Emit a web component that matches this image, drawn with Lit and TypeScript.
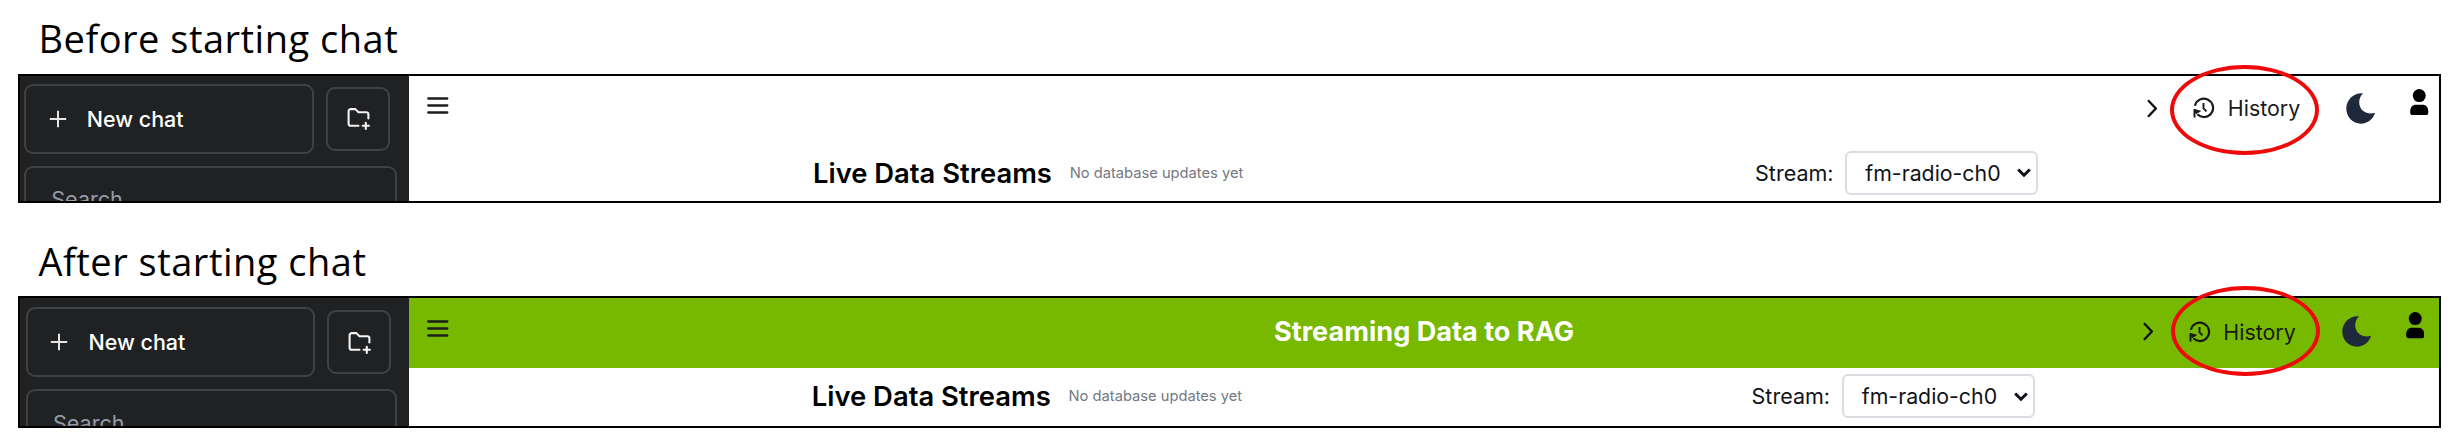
import { LitElement, html, css, svg } from "lit";
import { customElement, property } from "lit/decorators.js";

const plusIcon = svg`<svg class="plus" viewBox="0 0 18 18" width="18" height="18"><path d="M9 .8v16.4M.8 9h16.4" fill="none" stroke="currentColor" stroke-width="2"/></svg>`;

const folderIcon = svg`<svg viewBox="0 0 24 24" width="25" height="25" fill="none" stroke="currentColor" stroke-width="2" stroke-linecap="round" stroke-linejoin="round"><path d="M12 19H4.500a2 2 0 0 1-2-2V5a2 2 0 0 1 2-2H9l3 3h7.500a2 2 0 0 1 2 2v4"/><path d="M16 19h6M19 16v6"/></svg>`;

const menuIcon = svg`<svg class="menu" viewBox="0 0 22 17" width="22" height="17"><path d="M1.300 1.500h19M1.300 8.500h19M1.300 15.500h19" fill="none" stroke="currentColor" stroke-width="2.300" stroke-linecap="round"/></svg>`;

const chevronIcon = svg`<svg class="chevron" viewBox="0 0 10 19" width="10" height="19"><path d="M1 1.200l7.800 8.300L1 17.800" fill="none" stroke="currentColor" stroke-width="2.300"/></svg>`;

const historyIcon = svg`<svg class="history-icon" viewBox="0 0 22 22" width="22" height="22" fill="none" stroke="currentColor"><path d="M1.900 8.800A9.200 9.200 0 1 1 4.300 17.300" stroke-width="2.200"/><path d="M.900 12.300l6.500 1.900-4.400 2.300z" fill="currentColor" stroke-width="1"/><path d="M1.500 13v7.500" stroke-width="2"/><path d="M10.500 6v5.300l3 3" stroke-width="1.900"/></svg>`;

const moonIcon = svg`<svg class="moon" viewBox="0 0 29.300 31" width="29.3" height="31"><path d="M16.800.400C11.500 6 12.500 14 17 17.800c3.600 3 8 3.400 12.100 2C27 26.600 21.500 30.700 15 30.700 6.600 30.700.300 24 .300 15.600.300 7.200 7.500-.300 16.800.400z" fill="currentColor"/></svg>`;

const userIcon = svg`<svg class="user" viewBox="0 0 18.500 26.500" width="18.5" height="26.5" fill="currentColor"><circle cx="9.250" cy="6.600" r="6.500"/><path d="M.200 22.500c0-4 2.300-6.700 5.600-6.700h6.900c3.300 0 5.600 2.700 5.600 6.700v1.300c0 1.500-1 2.500-2.500 2.500H2.700c-1.500 0-2.500-1-2.500-2.500z"/></svg>`;

const caretIcon = svg`<svg viewBox="0 0 14 9" width="14" height="9"><path d="M1.200 1.500L7 7.200l5.800-5.700" fill="none" stroke="currentColor" stroke-width="3"/></svg>`;

@customElement("chat-frame")
export class ChatFrame extends LitElement {
  @property() heading = "";

  static styles = css`
    :host {
      --side-left: 4.3px;
      --side-top: 7.5px;
      --new-width: 290px;
      --folder-gap: 12px;
      --search-width: 372.5px;
      --search-height: 66px;
      --search-gap: 12.3px;
      --menu-left: 17.5px;
      --bar-bottom: 6px;
      --bar-right: 10.5px;
      --row-left: 403.7px;
      --row-right: 401px;
      --row-top: 4.7px;
      --bar-color: transparent;
      display: block;
      position: relative;
      font-family: Inter, sans-serif;
      font-size: 21.4px;
      line-height: 30px;
      color: #111318;
    }
    :host([started]) {
      --side-left: 6px;
      --side-top: 9.3px;
      --new-width: 289px;
      --folder-gap: 12px;
      --search-width: 371px;
      --search-height: 67.5px;
      --search-gap: 12px;
      --menu-left: 18px;
      --bar-bottom: 3px;
      --bar-right: 15px;
      --row-left: 402.5px;
      --row-right: 404.5px;
      --row-top: 6px;
      --bar-color: #76b900;
    }
    * { box-sizing: border-box; }
    svg { display: block; flex: none; }
    .frame {
      display: flex;
      width: 2423px;
      height: 129px;
      border: 2px solid #000;
      overflow: hidden;
      background: #fff;
    }
    :host([started]) .frame { height: 132px; }
    .side {
      width: 389.3px;
      flex: none;
      overflow: hidden;
      padding: var(--side-top) 0 0 var(--side-left);
      background: #202123;
      color: #fff;
    }
    .tools {
      display: flex;
      align-items: center;
      gap: var(--folder-gap);
    }
    .new, .folder, .search {
      display: flex;
      align-items: center;
      border: 2px solid #404143;
      border-radius: 9px;
    }
    .new {
      width: var(--new-width);
      height: 70px;
      padding-left: 22.4px;
      gap: 20px;
      font-size: 21.5px;
      font-weight: 500;
    }
    .plus { color: #e4e4e5; }
    .folder {
      width: 64px;
      height: 64px;
      justify-content: center;
      color: #f4f4f4;
    }
    .search {
      width: var(--search-width);
      height: var(--search-height);
      margin-top: var(--search-gap);
      padding-left: 25px;
      font-size: 21.55px;
      color: #949ba7;
    }
    .main { flex: 1; min-width: 0; }
    .bar {
      height: 70px;
      padding: 0 var(--bar-right) var(--bar-bottom) var(--menu-left);
      display: flex;
      align-items: center;
      background: var(--bar-color);
    }
    .menu { margin-bottom: 6px; color: #1c1c1c; }
    .title {
      flex: 1;
      padding-left: 256px;
      text-align: center;
      font-size: 27.1px;
      font-weight: 700;
      color: #fff;
      white-space: nowrap;
    }
    .actions {
      display: flex;
      align-items: center;
      color: #111;
    }
    .chevron { margin-right: 36px; }
    .history {
      display: flex;
      align-items: center;
      gap: 12.5px;
      margin-right: 45.8px;
      color: #1a1a1a;
    }
    .moon { margin-right: 34.7px; color: #1e293b; }
    .user { margin-bottom: 12px; color: #000; }
    .row {
      display: flex;
      align-items: center;
      padding: var(--row-top) var(--row-right) 0 var(--row-left);
    }
    .name { font-size: 27.4px; font-weight: 600; color: #000; }
    .note { margin-left: 17.8px; font-size: 14.7px; color: #737882; }
    .label { margin-left: auto; font-size: 21.5px; }
    .select {
      width: 193px;
      height: 44px;
      margin-left: 11.5px;
      padding: 0 5px 0 18.3px;
      display: flex;
      align-items: center;
      justify-content: space-between;
      border: 2px solid #dadde3;
      border-radius: 6px;
      background: #fff;
      font-size: 21.3px;
    }
    .ring {
      position: absolute;
      left: 2152px;
      top: -9px;
      width: 149px;
      height: 90px;
      border: 4px solid #ee0a0a;
      border-radius: 50%;
    }
    :host([started]) .ring { left: 2153px; top: -10px; }
  `;

  render() {
    return html`
      <div class="frame">
        <div class="side">
          <div class="tools">
            <div class="new">${plusIcon}<span>New chat</span></div>
            <div class="folder">${folderIcon}</div>
          </div>
          <div class="search">Search</div>
        </div>
        <div class="main">
          <div class="bar">
            ${menuIcon}
            <div class="title">${this.heading}</div>
            <div class="actions">
              ${chevronIcon}
              <div class="history">${historyIcon}<span>History</span></div>
              ${moonIcon}${userIcon}
            </div>
          </div>
          <div class="row">
            <span class="name">Live Data Streams</span>
            <span class="note">No database updates yet</span>
            <span class="label">Stream:</span>
            <div class="select"><span>fm-radio-ch0</span>${caretIcon}</div>
          </div>
        </div>
      </div>
      <div class="ring"></div>
    `;
  }
}

@customElement("app-root")
export class AppRoot extends LitElement {
  static styles = css`
    :host {
      display: block;
      height: 443px;
      overflow: hidden;
      background: #fff;
    }
    .caption {
      margin: 0;
      padding-left: 38.5px;
      height: 74px;
      line-height: 76px;
      font-family: "Open Sans", sans-serif;
      font-size: 38px;
      font-weight: 400;
      letter-spacing: 0.5px;
      color: #000;
    }
    .after {
      margin-top: 19px;
      line-height: 79px;
    }
    chat-frame { margin-left: 18px; }
  `;

  render() {
    return html`
      <h1 class="caption">Before starting chat</h1>
      <chat-frame></chat-frame>
      <h1 class="caption after">After starting chat</h1>
      <chat-frame started heading="Streaming Data to RAG"></chat-frame>
    `;
  }
}
